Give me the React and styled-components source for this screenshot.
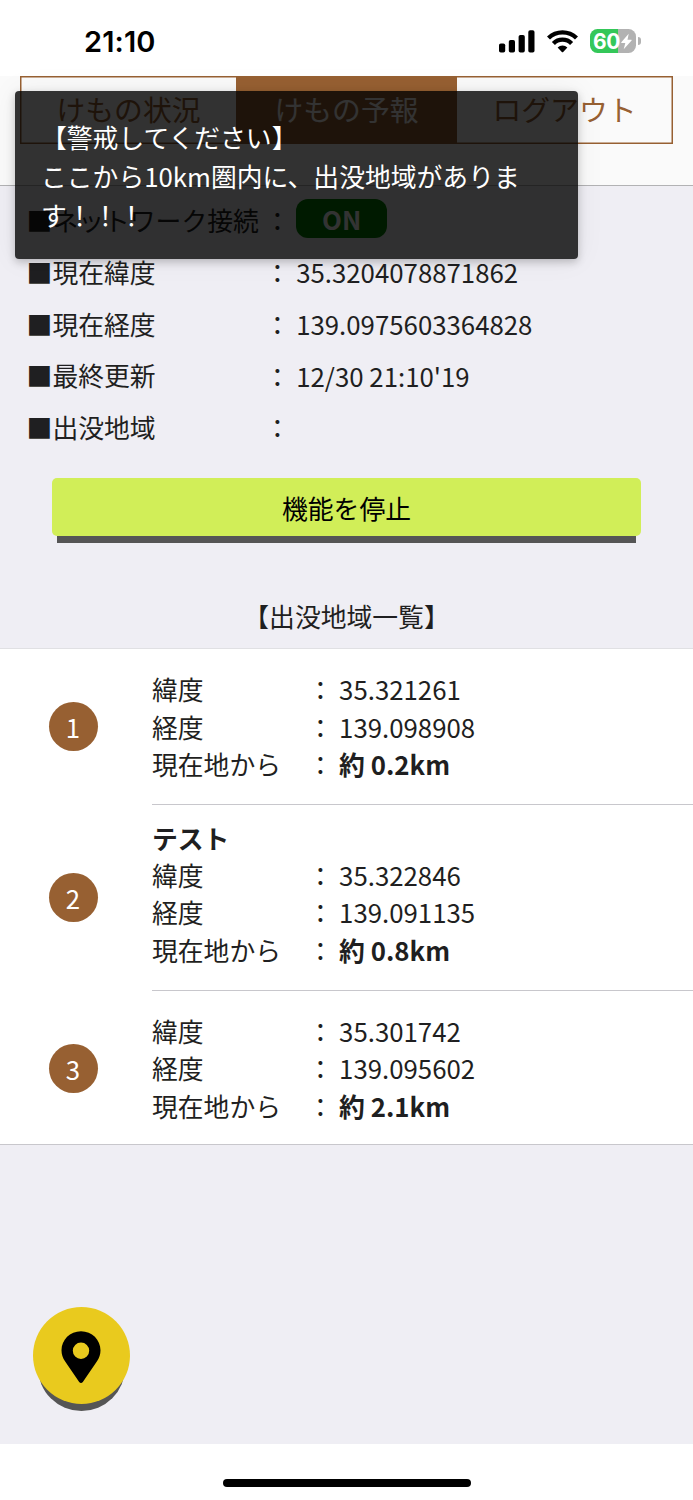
import styled, { createGlobalStyle } from "styled-components";

const tabs = [
    { id: 1, label: "けもの状況" },
    { id: 2, label: "けもの予報", active: true },
    { id: 3, label: "ログアウト" },
];

const statusList = [
    { label: "ネットワーク接続", badge: "ON" },
    { label: "現在緯度", value: "35.3204078871862" },
    { label: "現在経度", value: "139.0975603364828" },
    { label: "最終更新", value: "12/30 21:10'19" },
    { label: "出没地域", value: "" },
];

const areas = [
    { id: 1, lat: "35.321261", lng: "139.098908", distance: "約 0.2km" },
    {
        id: 2,
        name: "テスト",
        lat: "35.322846",
        lng: "139.091135",
        distance: "約 0.8km",
    },
    { id: 3, lat: "35.301742", lng: "139.095602", distance: "約 2.1km" },
];

const SignalIcon = () => (
    <svg width="36" height="23" viewBox="0 0 36 23">
        <rect x="0" y="13.5" width="6.2" height="9" rx="1.8" />
        <rect x="9.8" y="10" width="6.2" height="12.5" rx="1.8" />
        <rect x="19.6" y="5" width="6.2" height="17.5" rx="1.8" />
        <rect x="29.3" y="0.2" width="6.2" height="22.3" rx="1.8" />
    </svg>
);

const WifiIcon = () => (
    <svg width="31" height="23" viewBox="0 0 31 23">
        <g fill="none" stroke="#000" strokeWidth="4.3">
            <path d="M1.5 8 A20 20 0 0 1 29.5 8" />
            <path d="M6.4 13.5 A12.7 12.7 0 0 1 24.6 13.5" />
        </g>
        <path d="M10.6 17.6 A7 7 0 0 1 20.4 17.6 L16.2 21.9 Q15.5 22.5 14.8 21.9 Z" />
    </svg>
);

const BoltIcon = () => (
    <svg width="13" height="17" viewBox="0 0 12 17">
        <path
            d="M8.2 0.8 L0.8 9.3 Q0.5 9.9 1.1 9.9 H4.8 L3.2 16.2 L11.1 7.4 Q11.5 6.7 10.8 6.7 H7 Z"
            fill="#fff"
        />
    </svg>
);

const PinIcon = () => (
    <svg width="40" height="53" viewBox="0 0 40 53">
        <path
            fillRule="evenodd"
            d="M20 0.2 C9 0.2 0.5 8.8 0.5 19.2 C0.5 23.5 1.7 26.8 4 30.2 L18 50.7 Q20 53.2 22 50.7 L36 30.2 C38.3 26.8 39.5 23.5 39.5 19.2 C39.5 8.8 31 0.2 20 0.2 Z M20 11.5 A8.2 8.2 0 1 0 20 27.9 A8.2 8.2 0 1 0 20 11.5 Z"
        />
    </svg>
);

const AreaItem = ({ area }) => {
    return (
        <Item>
            <ItemLeft>
                <Number>{area.id}</Number>
            </ItemLeft>
            <ItemBody $named={!!area.name}>
                {area.name && <AreaName>{area.name}</AreaName>}
                <AreaRow>
                    <span>緯度</span>
                    <span>： {area.lat}</span>
                </AreaRow>
                <AreaRow>
                    <span>経度</span>
                    <span>： {area.lng}</span>
                </AreaRow>
                <AreaRow>
                    <span>現在地から</span>
                    <span>
                        ： <b>{area.distance}</b>
                    </span>
                </AreaRow>
            </ItemBody>
        </Item>
    );
};

const App = () => {
    return (
        <>
            <GlobalStyle />
            <Screen>
                <StatusBar>
                    <Time>21:10</Time>
                    <StatusIcons>
                        <SignalIcon />
                        <WifiIcon />
                        <BatteryWrapper>
                            <Battery>
                                60
                                <BoltIcon />
                            </Battery>
                            <BatteryCap />
                        </BatteryWrapper>
                    </StatusIcons>
                </StatusBar>
                <Header>
                    <Segment>
                        {tabs.map((tab) => (
                            <Tab key={tab.id} $active={tab.active}>
                                {tab.label}
                            </Tab>
                        ))}
                    </Segment>
                </Header>
                <Main>
                    <StatusTable>
                        {statusList.map((row) => (
                            <StatusRow key={row.label}>
                                <span>■{row.label}</span>
                                <StatusValue>
                                    ： {row.value}
                                    {row.badge && <Badge>{row.badge}</Badge>}
                                </StatusValue>
                            </StatusRow>
                        ))}
                    </StatusTable>
                    <StopButton>機能を停止</StopButton>
                    <ListTitle>
                        <Bracket>【</Bracket>出没地域一覧<Bracket>】</Bracket>
                    </ListTitle>
                    <AreaList>
                        {areas.map((area) => (
                            <AreaItem key={area.id} area={area} />
                        ))}
                    </AreaList>
                </Main>
                <Footer>
                    <HomeBar />
                </Footer>
                <Fab>
                    <PinIcon />
                </Fab>
                <Toast>
                    <Bracket>【</Bracket>警戒してください<Bracket>】</Bracket>
                    <br />
                    ここから10km圏内に、出没地域があります！！！
                </Toast>
            </Screen>
        </>
    );
};

const GlobalStyle = createGlobalStyle`
    * {
        box-sizing: border-box;
    }

    body {
        margin: 0;
        color: #1f1f21;
        font-family: "Noto Sans CJK JP", sans-serif;
        font-size: 25.8px;
    }

    button {
        border: 0;
        padding: 0;
        font-family: inherit;
        font-size: inherit;
    }

    svg {
        display: block;
        flex: none;
    }
`;

const Screen = styled.div`
    position: relative;
    display: flex;
    flex-direction: column;
    width: 693px;
    height: 1500px;
    overflow: hidden;
    background: #efeef4;
`;

const StatusBar = styled.div`
    display: flex;
    justify-content: space-between;
    height: 76px;
    padding: 0 52px 0 84px;
    background: #fff;
    color: #000;
`;

const Time = styled.div`
    padding-top: 24px;
    font-family: Inter, sans-serif;
    font-size: 29px;
    font-weight: 600;
    line-height: 36px;
    letter-spacing: 0.1px;
`;

const StatusIcons = styled.div`
    display: flex;
    align-items: center;
    gap: 12px;
    height: 82px;
`;

const BatteryWrapper = styled.div`
    display: flex;
    align-items: center;
    gap: 2px;
`;

const Battery = styled.div`
    display: flex;
    align-items: center;
    justify-content: center;
    width: 46px;
    height: 24px;
    border-radius: 7.5px;
    background: linear-gradient(to right, #34c759 60%, #b2b2b2 60%);
    color: #fff;
    font-family: Inter, sans-serif;
    font-size: 21px;
    font-weight: 700;
    letter-spacing: -0.3px;
`;

const BatteryCap = styled.div`
    width: 3px;
    height: 8px;
    border-radius: 0 3px 3px 0;
    background: #b2b2b2;
`;

const Header = styled.div`
    height: 110px;
    padding: 0 20px;
    background: #fafafa;
    border-bottom: 1px solid #b2b2b4;
`;

const Segment = styled.div`
    display: grid;
    grid-template-columns: 215px 221px 1fr;
    height: 68px;
    border: 1px solid #976032;
    box-shadow: inset 0 0 0 0.5px #976032;
`;

const Tab = styled.button`
    padding-bottom: 3px;
    background: ${(props) => (props.$active ? "#976032" : "transparent")};
    color: ${(props) => (props.$active ? "#fff" : "#976032")};
    font-size: 28.8px;
    line-height: 60px;
`;

const Main = styled.div`
    flex: 1;
`;

const StatusTable = styled.div`
    padding: 8px 26px 0 26.6px;
`;

const StatusRow = styled.div`
    display: grid;
    grid-template-columns: 238px 1fr;
    height: 51.8px;
    line-height: 51.4px;
    white-space: nowrap;
`;

const StatusValue = styled.div`
    display: flex;
    align-items: center;
    white-space: pre;
`;

const Badge = styled.span`
    width: 91px;
    height: 39px;
    margin-bottom: 2px;
    border-radius: 12px;
    background: #008000;
    color: #fff;
    font-weight: 700;
    line-height: 39px;
    text-align: center;
`;

const StopButton = styled.button`
    display: block;
    width: 589px;
    height: 58px;
    margin: 25px auto 0;
    border-radius: 5px;
    background: #d1ee58;
    box-shadow: 0 12px 0 -5px #555;
    color: #000;
    line-height: 59px;
`;

const Bracket = styled.span`
    font-family: "Noto Sans CJK SC", sans-serif;
`;

const ListTitle = styled.div`
    height: 112px;
    padding-top: 60px;
    line-height: 39px;
    text-align: center;
`;

const AreaList = styled.div`
    border-top: 1px solid #e0e0e3;
    border-bottom: 1px solid #c8c7cc;
    background: #fff;
`;

const Item = styled.div`
    display: flex;
`;

const ItemLeft = styled.div`
    display: flex;
    align-items: center;
    width: 152px;
    padding-left: 48.5px;

    ${Item}:last-child & {
        padding-top: 2px;
    }
`;

const Number = styled.div`
    width: 49px;
    height: 49px;
    border-radius: 50%;
    background: #976032;
    color: #fff;
    line-height: 49px;
    text-align: center;
`;

const ItemBody = styled.div`
    flex: 1;
    padding: ${(props) => (props.$named ? "14px 0 22px" : "21.5px 0 21.5px")};
    border-bottom: 1px solid #c8c7cc;
    line-height: 37.3px;

    ${Item}:last-child & {
        padding-top: 21px;
        padding-bottom: 20px;
        border-bottom: 0;
    }
`;

const AreaName = styled.div`
    font-weight: 700;
`;

const AreaRow = styled.div`
    display: grid;
    grid-template-columns: 155.5px 1fr;
    height: 37.3px;
`;

const Footer = styled.div`
    display: flex;
    justify-content: center;
    align-items: flex-start;
    height: 56px;
    padding-top: 34.5px;
    background: #fff;
`;

const HomeBar = styled.div`
    width: 248px;
    height: 8px;
    border-radius: 4px;
    background: #000;
`;

const Fab = styled.button`
    position: absolute;
    left: 32.5px;
    bottom: 96px;
    display: flex;
    align-items: center;
    justify-content: center;
    width: 97px;
    height: 97px;
    padding-top: 4px;
    border-radius: 50%;
    background: #e9ca1e;
    box-shadow: 0 12px 0 -5px #555;
`;

const Toast = styled.div`
    position: absolute;
    top: 91px;
    left: 15px;
    width: 563px;
    height: 168px;
    padding: 26px 54px 0 26px;
    border-radius: 4px;
    background: rgba(0, 0, 0, 0.8);
    box-shadow: 0 3px 8px rgba(0, 0, 0, 0.22), 0 0 30px rgba(0, 0, 0, 0.06);
    color: #fff;
    line-height: 39px;
`;

export default App;
